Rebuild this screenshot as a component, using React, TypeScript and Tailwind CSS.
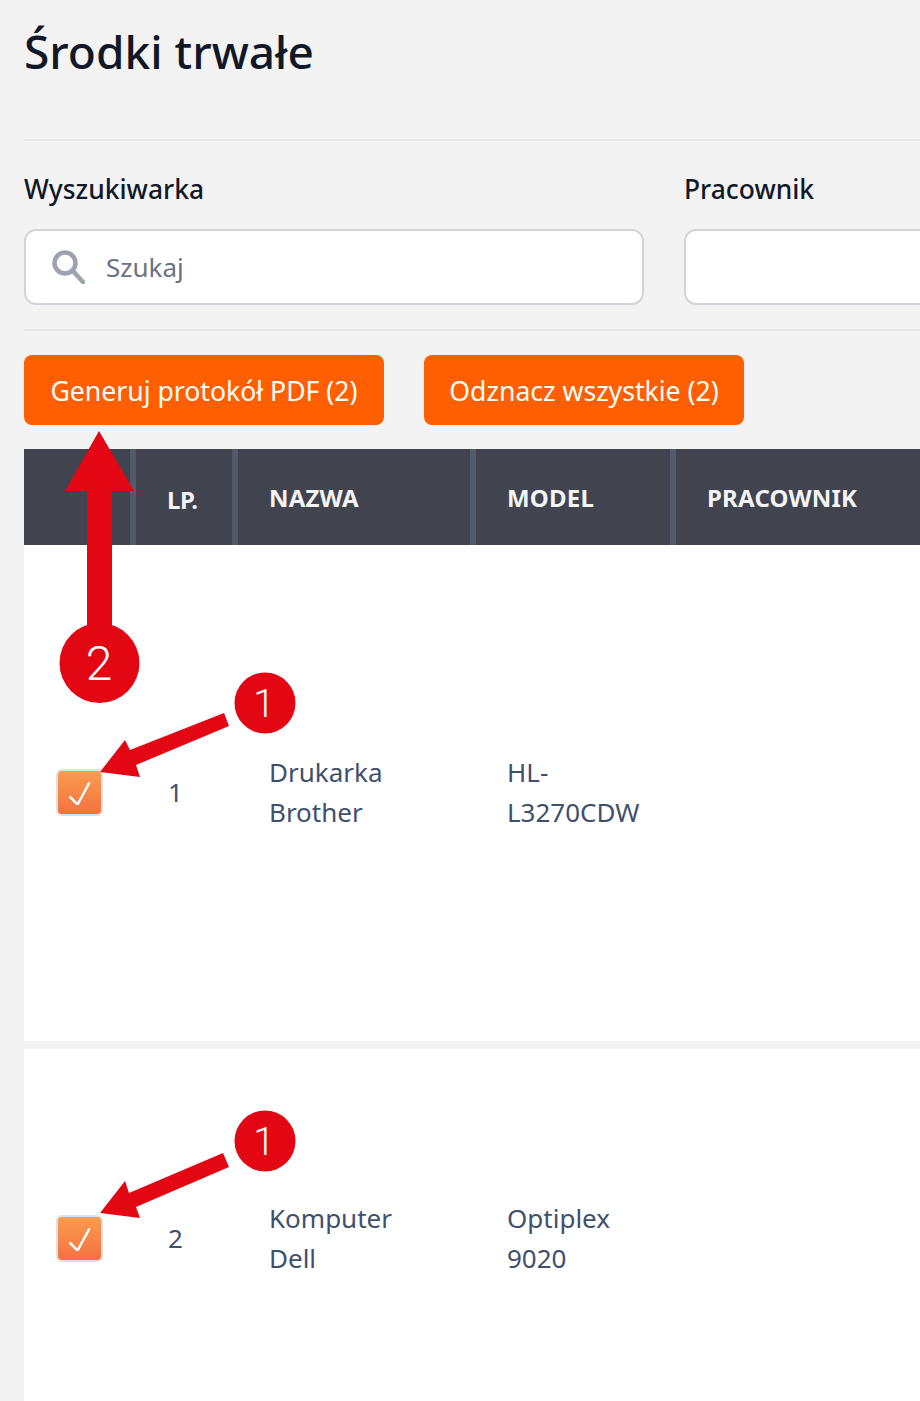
const font = { fontFamily: '"Noto Sans", sans-serif' };

function SearchIcon() {
  return (
    <svg width="33" height="34" viewBox="0 0 33 34" fill="none" stroke="#9ca3af" strokeWidth="4.5">
      <circle cx="13" cy="13" r="10.5" />
      <path d="M21 21l10 11" strokeLinecap="round" />
    </svg>
  );
}

function RowCheckbox() {
  return (
    <div className="flex h-[47px] w-[47px] items-center justify-center rounded-[6px] border-2 border-[#e0e0e0] bg-gradient-to-b from-[#fa9c52] to-[#f4703f]">
      <svg width="26" height="26" viewBox="0 0 26 26" fill="none">
        <path d="M2.5 17.5l8 8 12-22" stroke="#fff" strokeWidth="2.5" />
      </svg>
    </div>
  );
}

function Row({ lp, name, model, className }: { lp: string; name: string[]; model: string[]; className: string }) {
  return (
    <div className={`flex items-center bg-white pb-[2px] text-[26px] leading-[40px] text-[#3f506c] ${className}`}>
      <div className="w-[112px] pl-[32px]">
        <RowCheckbox />
      </div>
      <div className="w-[134px] pl-[32px]">{lp}</div>
      <div className="w-[238px] -ml-[1px] mr-[1px]">
        {name.map((l) => (
          <div key={l}>{l}</div>
        ))}
      </div>
      <div className="-ml-[1px]">
        {model.map((l) => (
          <div key={l}>{l}</div>
        ))}
      </div>
    </div>
  );
}

function Th({ w, label, extra }: { w: string; label: string; extra: string }) {
  return (
    <div className={`flex h-full shrink-0 items-center border-r-[6px] border-[#525a6c] ${w} ${extra}`}>
      {label}
    </div>
  );
}

function Callouts() {
  return (
    <svg className="absolute left-0 top-0" width="920" height="1401" viewBox="0 0 920 1401" fill="#e30613">
      <path d="M99 431l35 60h-22v140h-25V491H65z" />
      <circle cx="99.5" cy="663" r="40" />
      <path d="M224 713l5 13-93 39 4 12-40-5 25-32 5 10z" />
      <circle cx="265" cy="703" r="30.5" />
      <path d="M223 1153l6 14-93 40 4 11-40-5 25-32 4 12z" />
      <circle cx="265" cy="1141" r="30.5" />
      <g fill="#fff" fontFamily="Roboto, sans-serif" fontWeight="350" textAnchor="middle">
        <text x="99" y="680" fontSize="48">2</text>
        <text x="264" y="717" fontSize="39">1</text>
        <text x="264" y="1155" fontSize="39">1</text>
      </g>
    </svg>
  );
}

export default function App() {
  return (
    <div style={font} className="relative h-[1401px] w-[920px] overflow-hidden bg-[#f3f3f3] pl-[24px]">
      <h1 className="h-[139px] pt-[21px] text-[46px] leading-[60px] font-medium text-[#111827]">Środki trwałe</h1>
      <div className="h-[2px] w-[896px] bg-[#e7e7ea]" />

      <div className="flex h-[190px] w-[896px] gap-[40px] border-b-2 border-[#e7e7ea] pt-[30px]">
        <div className="w-[620px] shrink-0">
          <label className="block text-[26.4px] leading-[36px] font-medium text-[#111827]">Wyszukiwarka</label>
          <div className="mt-[22px] flex h-[76px] items-center rounded-[12px] border-2 border-[#d1d5db] bg-white pl-[26px]">
            <SearchIcon />
            <span className="ml-[21px] text-[26px] text-[#6b7280]">Szukaj</span>
          </div>
        </div>
        <div className="w-[400px] shrink-0">
          <label className="block text-[26.4px] leading-[36px] font-medium text-[#111827]">Pracownik</label>
          <div className="mt-[22px] h-[76px] rounded-[12px] border-2 border-[#d1d5db] bg-white" />
        </div>
      </div>

      <div className="mt-[24px] flex gap-[40px] text-[26.6px] text-white">
        <button className="h-[70px] w-[360px] rounded-[8px] bg-[#ff5f00] pt-[4px]">Generuj protokół PDF (2)</button>
        <button className="h-[70px] w-[320px] rounded-[8px] bg-[#ff5f00] pt-[4px]">Odznacz wszystkie (2)</button>
      </div>

      <div className="mt-[24px] flex h-[96px] w-[896px] items-center bg-[#41434f] text-[24px] font-bold tracking-[0.2px] text-[#f3f4f6]">
        <Th w="w-[112px]" label="" extra="" />
        <Th w="w-[102px]" label="LP." extra="pl-[31px] pt-[6px] tracking-[-0.5px]" />
        <Th w="w-[238px]" label="NAZWA" extra="pl-[31px] pt-[2px]" />
        <Th w="w-[200px]" label="MODEL" extra="pl-[31px] pt-[2px]" />
        <div className="pl-[31px] pt-[2px]">PRACOWNIK</div>
      </div>

      <Row className="h-[496px]" lp="1" name={["Drukarka", "Brother"]} model={["HL-", "L3270CDW"]} />
      <Row className="mt-[8px] h-[380px]" lp="2" name={["Komputer", "Dell"]} model={["Optiplex", "9020"]} />

      <Callouts />
    </div>
  );
}
